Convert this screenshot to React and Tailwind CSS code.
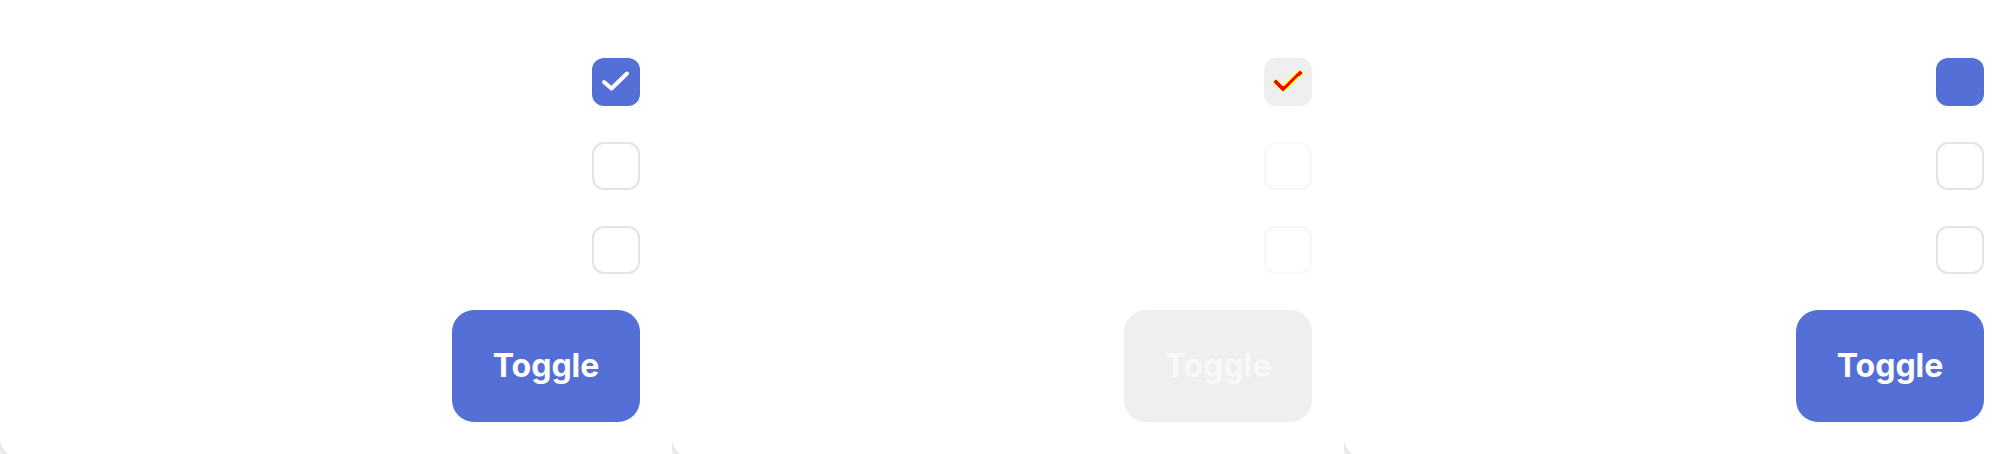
const PANELS = [
  { variant: 'default', check: 'white' },
  { variant: 'disabled', check: 'contrast' },
  { variant: 'default', check: 'none' },
]

function CheckMark({ kind }) {
  if (kind === 'none') return null
  if (kind === 'contrast') {
    return (
      <svg viewBox="0 0 48 48" className="size-12" shapeRendering="crispEdges">
        <path d="M12 24 L19 31 L36 15" fill="none" stroke="#ffff00" strokeWidth="5.5" strokeLinecap="square" />
        <path d="M12 24 L19 31 L36 15" fill="none" stroke="#ff0000" strokeWidth="3" strokeLinecap="square" />
      </svg>
    )
  }
  return (
    <svg viewBox="0 0 48 48" className="size-12">
      <path d="M12 24 L19.5 30.5 L35 15.5" fill="none" stroke="#fff" strokeWidth="4" strokeLinecap="round" strokeLinejoin="round" />
    </svg>
  )
}

function Box({ checked, disabled, check }) {
  if (checked) {
    return (
      <div className={`size-12 rounded-[12px] ${disabled ? 'bg-[#efefef]' : 'bg-[#5470d6]'}`}>
        <CheckMark kind={check} />
      </div>
    )
  }
  return (
    <div
      className={`size-12 rounded-[12px] border-2 bg-white ${disabled ? 'border-[#f7f7f7]' : 'border-[#e3e3e3]'}`}
    />
  )
}

function Panel({ variant, check }) {
  const disabled = variant === 'disabled'
  return (
    <div className="w-[672px] h-[454px] overflow-hidden bg-white shrink-0">
      <div className="h-[458px] bg-white rounded-bl-[20px] shadow-[-3px_3px_6px_rgba(0,0,0,0.12)] flex flex-col items-end gap-9 pt-[58px] pr-8">
        <Box checked disabled={disabled} check={check} />
        <Box disabled={disabled} />
        <Box disabled={disabled} />
        <button
          className={`w-[188px] h-[112px] rounded-[22px] text-[32px] font-bold font-['Inter',sans-serif]
                      ${disabled ? 'bg-[#efefef] text-[#f8f8f8]' : 'bg-[#5470d6] text-white'}`}
        >
          Toggle
        </button>
      </div>
    </div>
  )
}

export default function App() {
  return (
    <div className="flex w-[2016px] h-[454px] overflow-hidden bg-white">
      {PANELS.map((p, i) => (
        <Panel key={i} {...p} />
      ))}
    </div>
  )
}
